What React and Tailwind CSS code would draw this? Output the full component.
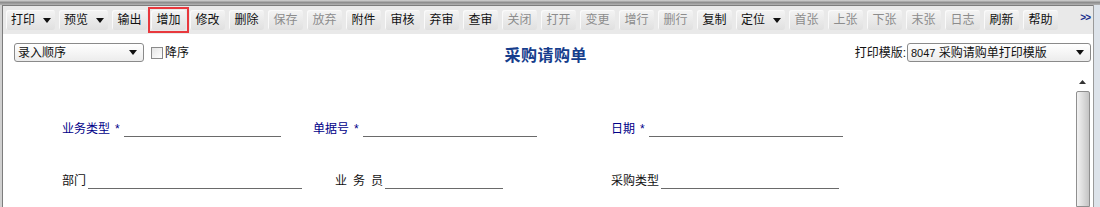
import React from 'react';

const tools = [
  { label: '打印', drop: true },
  { label: '预览', drop: true },
  { label: '输出' },
  { label: '增加', mark: true },
  { label: '修改' },
  { label: '删除' },
  { label: '保存', off: true },
  { label: '放弃', off: true },
  { label: '附件' },
  { label: '审核' },
  { label: '弃审' },
  { label: '查审' },
  { label: '关闭', off: true },
  { label: '打开', off: true },
  { label: '变更', off: true },
  { label: '增行', off: true },
  { label: '删行', off: true },
  { label: '复制' },
  { label: '定位', drop: true },
  { label: '首张', off: true },
  { label: '上张', off: true },
  { label: '下张', off: true },
  { label: '末张', off: true },
  { label: '日志', off: true },
  { label: '刷新' },
  { label: '帮助' },
];

function Caret() {
  return (
    <svg width="8" height="5" viewBox="0 0 8 5" className="shrink-0">
      <path d="M0 0h8L4 5z" fill="#111" />
    </svg>
  );
}

function ToolButton({ label, drop, off }) {
  return (
    <div
      className={`h-[20px] flex items-center rounded-[3px] bg-gradient-to-b from-[#f4f4f4] to-[#e0e0e0] shadow-[inset_1px_1px_0_#fafafa] text-[12px] ${
        drop ? 'w-[49px] pl-[5px] pr-[4px] justify-between' : 'w-[35px] justify-center'
      } ${off ? 'text-[#8c8c8c]' : 'text-[#111]'}`}
    >
      <span>{label}</span>
      {drop && <Caret />}
    </div>
  );
}

function SelectBox({ width, children }) {
  return (
    <div
      className={`${width} h-[19px] flex items-center justify-between border border-[#8a8a8a] rounded-[3px] bg-gradient-to-b from-[#ffffff] to-[#ececec] pl-[3px] pr-[6px] text-[12px] text-[#111]`}
    >
      <span className="truncate">{children}</span>
      <Caret />
    </div>
  );
}

function Field({ label, star, line, blue, gap = 'ml-[2px]', className = '' }) {
  return (
    <div className={`flex items-end ${className}`}>
      <span className={`flex text-[12px] leading-[14px] ${blue ? 'text-[#000088]' : 'text-[#111]'}`}>
        {label}
        {star && <span className="ml-[5px] text-[#000088]">*</span>}
      </span>
      <div className={`${line} ${gap} border-b border-[#6a6a6a] mb-[-1px]`} />
    </div>
  );
}

export default function App() {
  return (
    <div
      className="w-[1100px] h-[207px] overflow-hidden bg-[#c6c6c6] flex flex-col"
      style={{ fontFamily: '"Liberation Sans", "Noto Sans CJK SC", sans-serif' }}
    >
      {/* top frame band */}
      <div className="h-[5px] shrink-0 bg-gradient-to-b from-[#d6d6d6] via-[#8e8e8e] to-[#b4b4b4]" />

      <div className="flex flex-1 min-h-0">
        <div className="w-[2px] bg-[#d0d0d0]" />

        {/* main panel */}
        <div className="w-[1091px] flex flex-col border-l border-t border-[#7d7d7d] bg-white">
          {/* toolbar */}
          <div className="h-[28px] shrink-0 bg-[#e9e9e9] flex items-center pl-[3px] pr-[2px] gap-[4px] relative">
            {tools.map((t) =>
              t.mark ? (
                <div key={t.label} className="m-[-3px] p-[1px] border-2 border-[#e8383d]">
                  <ToolButton {...t} />
                </div>
              ) : (
                <ToolButton key={t.label} {...t} />
              )
            )}
            <span className="absolute right-[3px] top-[4px] text-[10px] font-bold text-[#1b2f8c] tracking-[-1px]">
              &gt;&gt;
            </span>
          </div>

          {/* header row */}
          <div className="h-[36px] shrink-0 flex items-center pt-[1px] pl-[11px] pr-[2px]">
            <SelectBox width="w-[130px]">录入顺序</SelectBox>
            <div className="ml-[7px] flex items-center">
              <div className="w-[12px] h-[12px] border border-[#8a8a8a] bg-gradient-to-br from-[#e4e4e4] to-[#ffffff]" />
              <span className="ml-[2px] text-[12px] text-[#111]">降序</span>
            </div>
            <div className="flex-1 flex justify-center pt-[7px] pl-[48px]">
              <span className="text-[16px] font-bold text-[#163d8c] tracking-[0.5px]">采购请购单</span>
            </div>
            <span className="text-[12px] text-[#111] mr-[1px]">打印模版:</span>
            <SelectBox width="w-[184px]">
              <span className="text-[11px]">8047</span> 采购请购单打印模版
            </SelectBox>
          </div>

          {/* body */}
          <div className="flex-1 flex min-h-0">
            <div className="flex-1 flex flex-col pl-[59px] pt-[52px] gap-[38px]">
              <div className="flex">
                <Field className="w-[251px]" label="业务类型" star blue gap="ml-[4px]" line="w-[157px]" />
                <Field className="w-[298px]" label="单据号" star blue gap="ml-[4px]" line="w-[174px]" />
                <Field label="日期" star blue gap="ml-[4px]" line="w-[194px]" />
              </div>
              <div className="flex">
                <Field className="w-[273px]" label="部门" line="w-[214px]" />
                <Field
                  className="w-[276px]"
                  label={
                    <>
                      <span className="mr-[6px]">业</span>
                      <span className="mr-[6px]">务</span>
                      <span>员</span>
                    </>
                  }
                  line="w-[118px]"
                />
                <Field label="采购类型" line="w-[178px]" />
              </div>
            </div>

            {/* scrollbar */}
            <div className="w-[17px] mr-[2px] flex flex-col items-center">
              <div className="h-[21px] w-full flex items-center justify-center pt-[2px]">
                <svg width="7" height="4" viewBox="0 0 7 4">
                  <path d="M0 4h7L3.5 0z" fill="#333" />
                </svg>
              </div>
              <div className="flex-1 w-[14px] border border-[#8f8f8f] rounded-t-[2px] bg-gradient-to-r from-[#f2f2f2] via-[#dcdcdc] to-[#c4c4c4]" />
            </div>
          </div>
        </div>

        <div className="w-[1px] bg-[#9a9a9a]" />
        <div className="flex-1 bg-[#dde3ea]" />
      </div>
    </div>
  );
}
